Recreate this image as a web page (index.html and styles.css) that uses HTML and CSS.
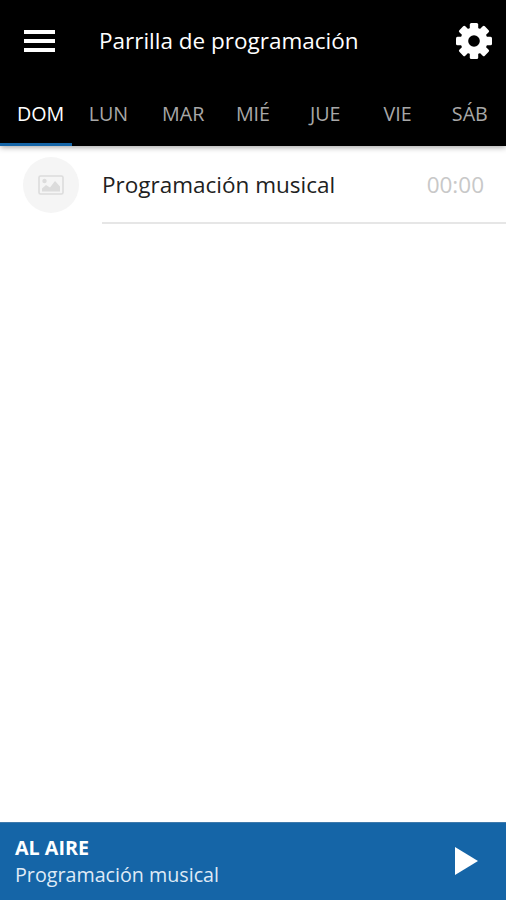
FILE: index.html
```html
<!DOCTYPE html>
<html lang="es">
<head>
    <meta charset="UTF-8">
    <meta name="viewport" content="width=device-width, initial-scale=1.0">
    <title>Parrilla de programación</title>
    <link rel="stylesheet" href="styles.css">
</head>
<body>
    <header class="header">
        <div class="toolbar">
            <button class="icon-btn" aria-label="Menú">
                <svg class="menu-icon" viewBox="0 0 31 22" fill="#fff">
                    <path d="M0 0h31v4H0zM0 9h31v4H0zM0 18h31v4H0z"/>
                </svg>
            </button>
            <h1>Parrilla de programación</h1>
            <button class="icon-btn settings" aria-label="Ajustes">
                <svg class="gear-icon" viewBox="-18 -18 36 36">
                    <g fill="#fff">
                        <circle r="13.5"/>
                        <rect x="-4.2" y="-18" width="8.4" height="36" rx="1.5"/>
                        <rect x="-4.2" y="-18" width="8.4" height="36" rx="1.5" transform="rotate(45)"/>
                        <rect x="-4.2" y="-18" width="8.4" height="36" rx="1.5" transform="rotate(90)"/>
                        <rect x="-4.2" y="-18" width="8.4" height="36" rx="1.5" transform="rotate(135)"/>
                    </g>
                    <circle r="5.8" fill="#000"/>
                </svg>
            </button>
        </div>
        <nav class="tabs">
            <a class="tab active">DOM</a>
            <a class="tab">LUN</a>
            <a class="tab">MAR</a>
            <a class="tab">MIÉ</a>
            <a class="tab">JUE</a>
            <a class="tab">VIE</a>
            <a class="tab">SÁB</a>
        </nav>
    </header>

    <main class="schedule">
        <div class="program">
            <div class="thumb">
                <svg viewBox="0 0 26 20" fill="none" stroke="#dcdcdc">
                    <rect x="1" y="1" width="24" height="18" rx="1.5" stroke-width="1.6"/>
                    <circle cx="6.5" cy="6" r="2.2" fill="#dcdcdc" stroke="none"/>
                    <path d="M4 16.5v-3l4-3.5 4 2.5 5-6.5 5 5.500v5z" fill="#dcdcdc" stroke="none"/>
                </svg>
            </div>
            <div class="program-info">
                <span class="program-name">Programación musical</span>
                <span class="program-time">00:00</span>
            </div>
        </div>
    </main>

    <footer class="player">
        <div class="player-info">
            <strong>AL AIRE</strong>
            <span>Programación musical</span>
        </div>
        <button class="icon-btn" aria-label="Reproducir">
            <svg class="play-icon" viewBox="0 0 23 28" fill="#fff">
                <path d="M0 0l23 14L0 28z"/>
            </svg>
        </button>
    </footer>
</body>
</html>
```

FILE: styles.css
```css
* {
    margin: 0;
    padding: 0;
    box-sizing: border-box;
}

body {
    font-family: 'Open Sans', sans-serif;
    background: #fff;
    color: #212121;
    height: 100vh;
    display: flex;
    flex-direction: column;
}

svg {
    display: block;
}

.icon-btn {
    background: none;
    border: none;
    cursor: pointer;
}

.header {
    background: #000;
    color: #fff;
    height: 146px;
    box-shadow: 0 1px 6px rgba(0, 0, 0, 0.4);
}

.toolbar {
    height: 82px;
    padding: 0 14px 0 24px;
    display: flex;
    align-items: center;
}

.menu-icon {
    width: 31px;
    height: 22px;
}

.toolbar h1 {
    margin-left: 44px;
    padding-bottom: 2px;
    font-size: 22.5px;
    font-weight: 400;
    white-space: nowrap;
}

.settings {
    margin-left: auto;
}

.gear-icon {
    width: 36px;
    height: 36px;
}

.tabs {
    height: 64px;
    display: grid;
    grid-template-columns: repeat(7, 1fr);
}

.tab {
    display: flex;
    align-items: center;
    justify-content: center;
    padding-top: 2px;
    font-size: 19.7px;
    color: #a8a8a8;
    border-bottom: 3px solid transparent;
}

.tab:nth-child(3) {
    padding-left: 5px;
}

.tab.active {
    padding-left: 9px;
    color: #fff;
    font-weight: 500;
    border-bottom-color: #1565a7;
}

.schedule {
    flex: 1;
}

.program {
    display: flex;
    padding-left: 23px;
    height: 78px;
}

.thumb {
    width: 56px;
    height: 56px;
    margin: 11px 23px 0 0;
    border-radius: 50%;
    background: #f5f5f5;
    display: flex;
    align-items: center;
    justify-content: center;
}

.thumb svg {
    width: 26px;
    height: 20px;
}

.program-info {
    flex: 1;
    display: flex;
    align-items: center;
    justify-content: space-between;
    padding: 1px 22px 0 0;
    border-bottom: 2px solid #e6e6e6;
    font-size: 22.5px;
}

.program-time {
    color: #c8c8c8;
}

.player {
    height: 78px;
    padding: 0 28px 2px 15px;
    background: #1565a7;
    border-top: 1px solid #3f7aac;
    color: #fff;
    display: flex;
    align-items: center;
    justify-content: space-between;
}

.player-info {
    display: flex;
    flex-direction: column;
    font-size: 19.7px;
    line-height: 27px;
}

.player-info span {
    color: #dfeaf6;
}

.play-icon {
    width: 23px;
    height: 28px;
}
```
